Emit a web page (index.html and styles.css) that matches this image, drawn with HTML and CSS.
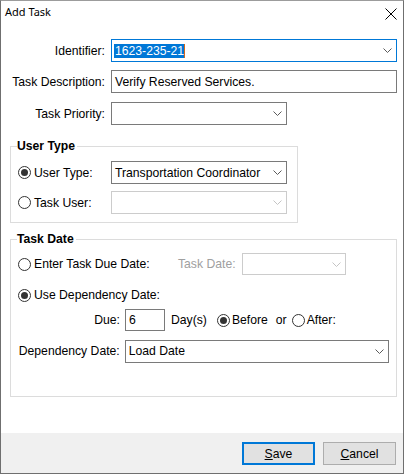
FILE: index.html
```html
<!DOCTYPE html>
<html lang="en">
<head>
<meta charset="utf-8">
<title>Add Task</title>
<link rel="stylesheet" href="styles.css">
</head>
<body>
<div class="window">
  <div class="titlebar">
    <span class="title">Add Task</span>
    <svg class="close" width="12" height="12" viewBox="0 0 12 12" aria-label="Close"><path d="M0.5 0.5 L11.5 11.5 M11.5 0.5 L0.5 11.5" stroke="#000" stroke-width="1" fill="none"/></svg>
  </div>

  <div class="main">
    <div class="row">
      <span class="lbl">Identifier:</span>
      <div class="combo focus w286">
        <span class="val"><span class="sel">1623-235-21</span><span class="caret"></span></span>
        <svg class="chev" width="9" height="5" viewBox="0 0 9 5"><polyline points="0.5,0.5 4.5,4.5 8.5,0.5" fill="none" stroke="#5a5a5a" stroke-width="1"/></svg>
      </div>
    </div>
    <div class="row gap8">
      <span class="lbl">Task Description:</span>
      <div class="textbox w286"><span class="val">Verify Reserved Services.</span></div>
    </div>
    <div class="row gap9">
      <span class="lbl">Task Priority:</span>
      <div class="combo w176">
        <span class="val"></span>
        <svg class="chev" width="9" height="5" viewBox="0 0 9 5"><polyline points="0.5,0.5 4.5,4.5 8.5,0.5" fill="none" stroke="#5a5a5a" stroke-width="1"/></svg>
      </div>
    </div>

    <fieldset class="group group-user">
      <legend>User Type</legend>
      <div class="grow">
        <div class="opt w93"><span class="radio on"></span><span>User Type:</span></div>
        <div class="combo w176">
          <span class="val">Transportation Coordinator</span>
          <svg class="chev" width="9" height="5" viewBox="0 0 9 5"><polyline points="0.5,0.5 4.5,4.5 8.5,0.5" fill="none" stroke="#5a5a5a" stroke-width="1"/></svg>
        </div>
      </div>
      <div class="grow gap7">
        <div class="opt w93"><span class="radio"></span><span>Task User:</span></div>
        <div class="combo disabled w176">
          <span class="val"></span>
          <svg class="chev" width="9" height="5" viewBox="0 0 9 5"><polyline points="0.5,0.5 4.5,4.5 8.5,0.5" fill="none" stroke="#c4c4c4" stroke-width="1"/></svg>
        </div>
      </div>
    </fieldset>

    <fieldset class="group group-date">
      <legend>Task Date</legend>
      <div class="drow">
        <div class="opt w160"><span class="radio"></span><span>Enter Task Due Date:</span></div>
        <span class="muted w64">Task Date:</span>
        <div class="combo disabled w104 h22">
          <span class="val"></span>
          <svg class="chev" width="9" height="5" viewBox="0 0 9 5"><polyline points="0.5,0.5 4.5,4.5 8.5,0.5" fill="none" stroke="#c4c4c4" stroke-width="1"/></svg>
        </div>
      </div>
      <div class="drow gap9">
        <div class="opt"><span class="radio on"></span><span>Use Dependency Date:</span></div>
      </div>
      <div class="drow gap3">
        <span class="dlbl">Due:</span>
        <div class="textbox w40 h22"><span class="val">6</span></div>
        <span class="days">Day(s)</span>
        <span class="radio on before"></span><span class="rtext">Before</span>
        <span class="or">or</span>
        <span class="radio after"></span><span class="rtext">After:</span>
      </div>
      <div class="drow gap9 h23">
        <span class="dlbl">Dependency Date:</span>
        <div class="combo w265">
          <span class="val">Load Date</span>
          <svg class="chev" width="9" height="5" viewBox="0 0 9 5"><polyline points="0.5,0.5 4.5,4.5 8.5,0.5" fill="none" stroke="#5a5a5a" stroke-width="1"/></svg>
        </div>
      </div>
    </fieldset>
  </div>

  <div class="footer">
    <button class="btn default" type="button"><u>S</u>ave</button>
    <button class="btn" type="button"><u>C</u>ancel</button>
  </div>
</div>
</body>
</html>
```

FILE: styles.css
```css
* { box-sizing: border-box; }
html, body { margin: 0; padding: 0; background: #fff; }
body {
  font-family: "Liberation Sans", Arial, sans-serif;
  font-size: 12.2px;
  color: #000;
}

.window {
  width: 404px;
  height: 474px;
  border: 1px solid #6f6f6f;
  border-top-color: #9c9c9c;
  background: #fff;
  display: flex;
  flex-direction: column;
}

.titlebar {
  height: 29px;
  flex: none;
  display: flex;
  justify-content: space-between;
  align-items: flex-start;
  padding: 3px 6px 0 4px;
}
.title {
  font-family: "Noto Sans", "Liberation Sans", sans-serif;
  font-size: 11px;
  line-height: 16px;
}
.close { margin-top: 4px; display: block; }

.main {
  flex: 1;
  padding: 9px 0 0 9px;
}

.row { display: flex; align-items: center; height: 23px; }
.gap3 { margin-top: 3px; }
.gap7 { margin-top: 7px; }
.gap8 { margin-top: 8px; }
.gap9 { margin-top: 9px; }

.lbl { width: 95px; margin-right: 6px; text-align: right; white-space: nowrap; }

.combo, .textbox {
  display: flex;
  align-items: center;
  height: 23px;
  border: 1px solid #7a7a7a;
  background: #fff;
  padding-left: 3px;
  white-space: nowrap;
  overflow: hidden;
}
.combo.focus { border-color: #0078d7; }
.combo.disabled { border-color: #cccccc; }
.val { flex: 1; display: flex; align-items: center; }
.chev { display: block; margin-right: 4px; flex: none; }
.h22 { height: 22px; }
.h23 { height: 23px; }

.w286 { width: 286px; }
.w176 { width: 176px; }
.w265 { width: 265px; }
.w104 { width: 104px; }
.w40 { width: 40px; }
.w93 { width: 93px; }
.w160 { width: 160px; }
.w64 { width: 64px; }

.sel {
  background: #0078d7;
  color: #fff;
  line-height: 14px;
  padding-left: 1px;
  margin-left: -1px;
}
.caret { width: 1px; height: 14px; background: #d2691e; }

.group {
  margin: 0;
  border: 1px solid #dcdcdc;
  padding: 7px 7px 8px 7px;
  min-width: 0;
}
.group legend {
  font-weight: bold;
  line-height: 16px;
  padding: 0 2px 0 0;
  margin-left: -1px;
}
.group-user { width: 288px; margin-top: 13px; }
.group-date { width: 387px; margin-top: 8px; padding-top: 6px; padding-bottom: 34px; }

.grow { display: flex; align-items: center; height: 23px; }
.drow { display: flex; align-items: center; height: 22px; }

.opt { display: flex; align-items: center; white-space: nowrap; }
.radio {
  width: 13px;
  height: 13px;
  border: 1px solid #333;
  border-radius: 50%;
  flex: none;
  margin-right: 3px;
  display: flex;
  align-items: center;
  justify-content: center;
  background: #fff;
}
.radio.on::after {
  content: "";
  width: 7px;
  height: 7px;
  border-radius: 50%;
  background: #333;
}

.muted { color: #a0a0a0; white-space: nowrap; }

.dlbl { width: 102px; text-align: right; margin-right: 5px; white-space: nowrap; }
.days { margin-left: 6px; }
.radio.before { margin-left: 10px; margin-right: 2px; }
.or { margin-left: 8px; }
.radio.after { margin-left: 5px; margin-right: 2px; }

.footer {
  height: 40px;
  flex: none;
  background: #f0f0f0;
  display: flex;
  justify-content: flex-end;
  align-items: flex-start;
  gap: 8px;
  padding: 9px 7px 0 0;
}
.btn {
  width: 73px;
  height: 23px;
  border: 1px solid #adadad;
  background: #e1e1e1;
  font-family: "Liberation Sans", Arial, sans-serif;
  font-size: 12.2px;
  color: #000;
  padding: 0;
  margin: 0;
}
.btn.default { border: 2px solid #0078d7; }
```
